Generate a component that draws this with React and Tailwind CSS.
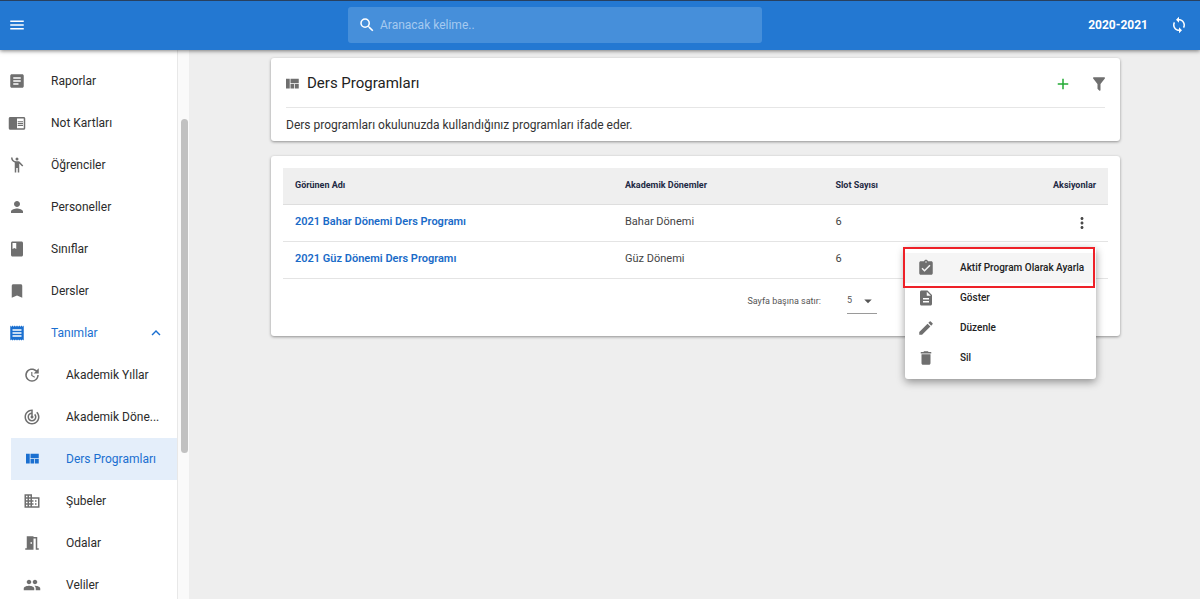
import { useState } from "react";
import {
    MdMenu, MdArticle, MdChromeReaderMode, MdEmojiPeople, MdPerson, MdClass, MdBookmark, MdReceipt,
    MdExpandLess, MdExpandMore, MdUpdate, MdTrackChanges, MdBusiness, MdMeetingRoom, MdPeople,
    MdAssignmentTurnedIn, MdDescription, MdEdit, MdDelete, MdSearch, MdAdd, MdLoop, MdMoreVert, MdArrowDropDown,
} from "react-icons/md";

function QuiltIcon({ className }) {
    return (
        <svg viewBox="0 0 24 24" fill="currentColor" className={className} aria-hidden="true">
            <path d="M10 18h5v-6h-5v6zm-6 0h5V5H4v13zm12 0h5v-6h-5v6zM10 5v6h11V5H10z" />
        </svg>
    );
}

function FilterIcon({ className }) {
    return (
        <svg viewBox="0 0 24 24" fill="currentColor" className={className} aria-hidden="true">
            <path d="M14 12v7.880c.04.3-.06.620-.29.830a.996.996 0 0 1-1.410 0l-2.010-2.010a.989.989 0 0 1-.29-.830V12h-.03L4.210 4.620a1 1 0 0 1 .170-1.400c.190-.140.400-.220.620-.220h14c.220 0 .430.080.620.220a1 1 0 0 1 .170 1.400L14.030 12H14z" />
        </svg>
    );
}

const mainLinks = [
    { label: "Raporlar", icon: MdArticle },
    { label: "Not Kartları", icon: MdChromeReaderMode },
    { label: "Öğrenciler", icon: MdEmojiPeople },
    { label: "Personeller", icon: MdPerson },
    { label: "Sınıflar", icon: MdClass },
    { label: "Dersler", icon: MdBookmark },
];

const subLinks = [
    { label: "Akademik Yıllar", icon: MdUpdate },
    { label: "Akademik Döne...", icon: MdTrackChanges },
    { label: "Ders Programları", icon: QuiltIcon, active: true },
    { label: "Şubeler", icon: MdBusiness },
    { label: "Odalar", icon: MdMeetingRoom },
    { label: "Veliler", icon: MdPeople },
];

const programs = [
    { name: "2021 Bahar Dönemi Ders Programı", term: "Bahar Dönemi", slots: 6 },
    { name: "2021 Güz Dönemi Ders Programı", term: "Güz Dönemi", slots: 6 },
];

const actions = [
    { label: "Aktif Program Olarak Ayarla", icon: MdAssignmentTurnedIn, highlighted: true },
    { label: "Göster", icon: MdDescription },
    { label: "Düzenle", icon: MdEdit },
    { label: "Sil", icon: MdDelete },
];

function Header() {
    return (
        <header className="relative z-10 grid h-[50px] shrink-0 grid-cols-[34fr_minmax(0,414px)_43fr] items-center border-t border-[#28405f] bg-[#2378d2] px-2 pb-[2px] text-white shadow-[0_1px_4px_rgba(0,0,0,0.5)]">
            <button aria-label="Menü" className="w-fit cursor-pointer">
                <MdMenu className="size-[18px]" />
            </button>
            <label className="flex h-9 items-center gap-1 rounded-[3px] bg-[#468fda] px-[10px]">
                <MdSearch className="size-[18px] shrink-0" />
                <input type="search" aria-label="Ara" placeholder="Aranacak kelime.." className="min-w-0 flex-1 bg-transparent text-xs outline-none placeholder:text-[#a5caf0]" />
            </label>
            <div className="flex items-center justify-end gap-[22px] pr-1">
                <button className="cursor-pointer text-xs font-bold">2020-2021</button>
                <button aria-label="Yenile" className="cursor-pointer">
                    <MdLoop className="size-[18px]" />
                </button>
            </div>
        </header>
    );
}

function Sidebar() {
    const [isOpen, setIsOpen] = useState(true);

    return (
        <aside className="flex w-[189px] shrink-0 overflow-hidden bg-white text-xs text-[#2b2b2b]">
            <nav className="w-[178px] shrink-0 border-r border-[#e8e8e8] pt-[10px]">
                {mainLinks.map(({ label, icon: Icon }) => (
                    <a key={label} href="#" className="flex h-[42px] items-center gap-[25px] pl-2">
                        <Icon className="size-[18px] shrink-0 text-[#6f6f6f]" />
                        {label}
                    </a>
                ))}
                <button onClick={() => setIsOpen(!isOpen)} className="flex h-[42px] w-full cursor-pointer items-center gap-[25px] pl-2 pr-3 text-[#1a6fd0]">
                    <MdReceipt className="size-[18px] shrink-0" />
                    <span className="flex-1 text-left">Tanımlar</span>
                    {isOpen ? <MdExpandLess className="size-[18px]" /> : <MdExpandMore className="size-[18px]" />}
                </button>
                {isOpen && subLinks.map(({ label, icon: Icon, active }) => (
                    <a
                        key={label}
                        href="#"
                        className={`ml-[11px] flex h-[42px] items-center gap-[25px] whitespace-nowrap pl-3 ${active ? "bg-[#e4eefa] text-[#1a6fd0]" : ""}`}
                    >
                        <Icon className={`size-[18px] shrink-0 ${active ? "" : "text-[#6f6f6f]"}`} />
                        {label}
                    </a>
                ))}
            </nav>
            <div className="flex-1 bg-[#fafafa] pl-[3px] pr-px pt-[69px]">
                <div className="h-[334px] rounded-full bg-[#c1c1c1]" />
            </div>
        </aside>
    );
}

function ActionMenu() {
    return (
        <div className="absolute right-[10px] top-[23px] z-10 w-48 text-left">
            <ul className="ml-[2px] mr-[-1px] rounded-[3px] bg-white pb-[6px] pt-[6px] shadow-[0_3px_8px_rgba(0,0,0,0.4)]">
                {actions.map(({ label, icon: Icon, highlighted }) => (
                    <li key={label}>
                        <button className={`flex h-[30px] w-full cursor-pointer items-center gap-[25px] whitespace-nowrap pl-3 text-[10px] font-medium text-[#222] ${highlighted ? "bg-[#f5f5f5]" : ""}`}>
                            <Icon className="size-[18px] shrink-0 text-[#6f6f6f]" />
                            {label}
                        </button>
                    </li>
                ))}
            </ul>
            <div className="pointer-events-none absolute left-0 top-0 h-[41px] w-full border-2 border-[#ee2128]" />
        </div>
    );
}

function ProgramTable() {
    return (
        <section className="rounded-[3px] bg-white px-3 pb-[21px] pt-3 shadow-[0_1px_3px_rgba(0,0,0,0.4)]">
            <table className="w-full table-fixed border-collapse text-left text-[11px] text-[#444]">
                <thead className="bg-[#efefef] text-[9px] text-[#1e2a44]">
                    <tr className="h-9 border-b border-[#dedede]">
                        <th className="w-[40%] px-3 font-bold">Görünen Adı</th>
                        <th className="w-[25.5%] px-3 font-bold">Akademik Dönemler</th>
                        <th className="w-[16%] px-3 font-bold">Slot Sayısı</th>
                        <th className="px-3 text-right font-bold">Aksiyonlar</th>
                    </tr>
                </thead>
                <tbody>
                    {programs.map((program, index) => (
                        <tr key={program.name} className="h-[37px] border-b border-[#e4e4e4]">
                            <td className="px-3">
                                <a href="#" className="font-semibold text-[#1a6bc8]">{program.name}</a>
                            </td>
                            <td className="px-3">{program.term}</td>
                            <td className="px-3">{program.slots}</td>
                            <td className="pr-[17px] text-right">
                                <div className="relative flex justify-end">
                                    <button aria-label="Aksiyonlar" className="cursor-pointer text-[#4a4a4a]">
                                        <MdMoreVert className="size-[18px]" />
                                    </button>
                                    {index === 0 && <div className="absolute right-[-14px] top-[10px]"><ActionMenu /></div>}
                                </div>
                            </td>
                        </tr>
                    ))}
                </tbody>
            </table>
            <div className="flex justify-end pr-[231px] pt-2 text-[9px] text-[#555]">
                <label htmlFor="pageSize" className="pr-[26px] leading-7">Sayfa başına satır:</label>
                <div className="relative">
                    <select id="pageSize" defaultValue="5" className="h-[27px] w-[30px] appearance-none border-b border-[#9a9a9a] bg-transparent pt-[2px] outline-none">
                        <option>5</option>
                        <option>10</option>
                        <option>25</option>
                    </select>
                    <MdArrowDropDown className="pointer-events-none absolute right-0 top-[5px] size-[18px]" />
                </div>
            </div>
        </section>
    );
}

export default function App() {
    return (
        <div className="flex h-screen flex-col overflow-hidden bg-[#eeeeee] font-['Roboto','Open_Sans',sans-serif]">
            <Header />
            <div className="flex min-h-0 flex-1">
                <Sidebar />
                <main className="min-w-0 flex-1 pl-[82px] pr-20 pt-2">
                    <section className="mb-[15px] rounded-[3px] bg-white px-[15px] shadow-[0_1px_3px_rgba(0,0,0,0.4)]">
                        <div className="flex h-[50px] items-center border-b border-[#e6e6e6] pt-[2px] text-[#6f6f6f]">
                            <QuiltIcon className="-ml-[3px] size-[18px]" />
                            <h1 className="flex-1 pl-[6px] text-[15px] text-[#222]">Ders Programları</h1>
                            <button aria-label="Ekle" className="mr-[18px] cursor-pointer text-[#23ab34]">
                                <MdAdd className="size-[18px]" />
                            </button>
                            <button aria-label="Filtrele" className="-mr-[3px] cursor-pointer">
                                <FilterIcon className="size-[18px]" />
                            </button>
                        </div>
                        <p className="h-[33px] text-xs leading-[34px] text-[#333]">Ders programları okulunuzda kullandığınız programları ifade eder.</p>
                    </section>
                    <ProgramTable />
                </main>
            </div>
        </div>
    );
}
